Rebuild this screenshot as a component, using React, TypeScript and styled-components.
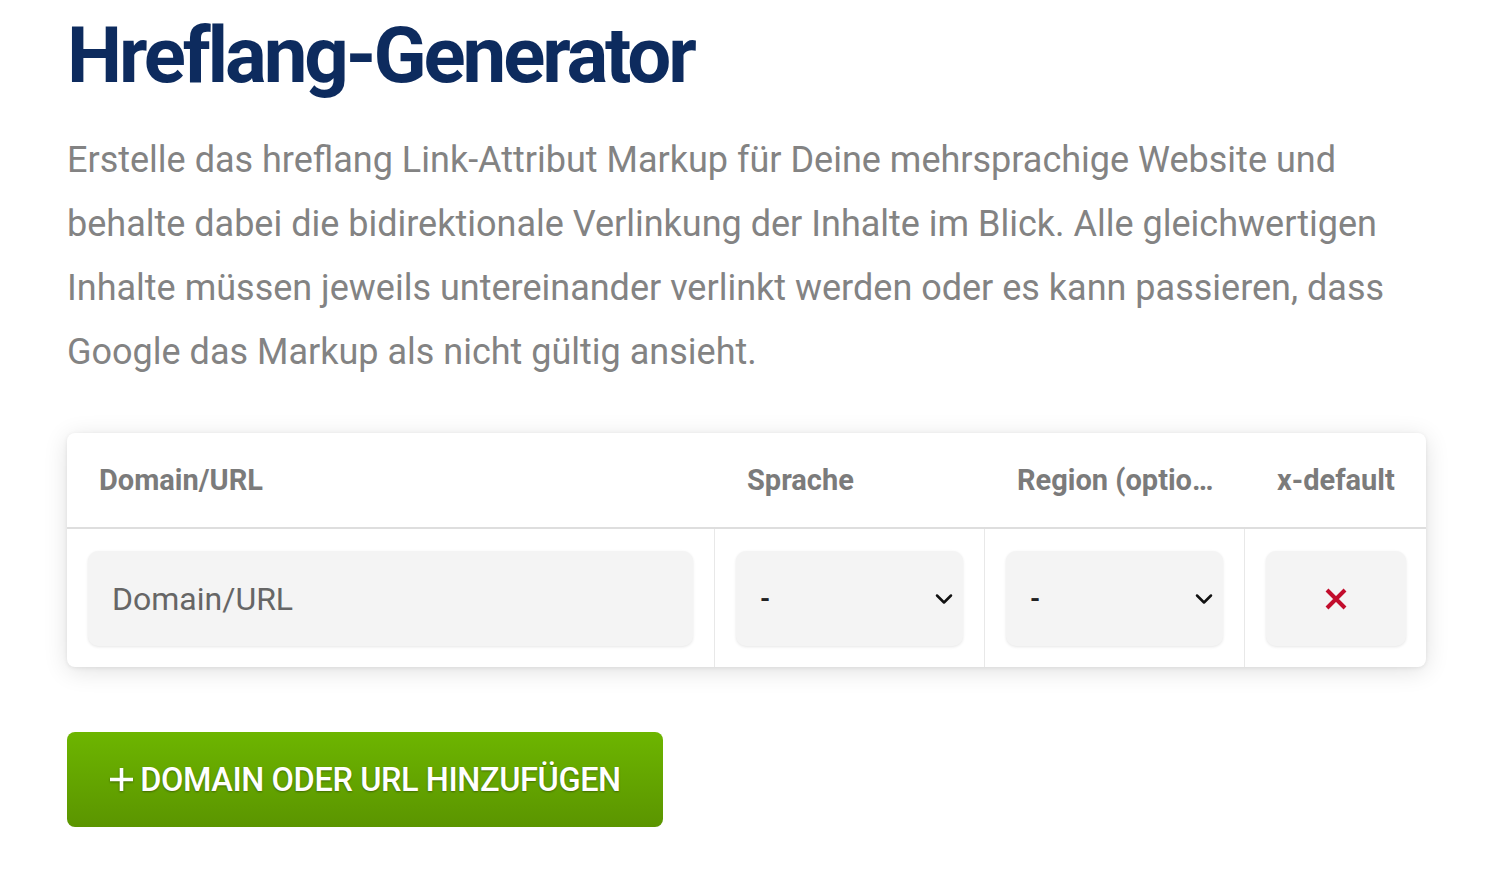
import React, { useState } from 'react'
import styled, { createGlobalStyle } from 'styled-components'

const GlobalStyle = createGlobalStyle`
  body {
    margin: 0;
    background: #fff;
    font-family: Roboto, "Liberation Sans", sans-serif;
  }
`

const Page = styled.main`
  padding: 8px 65px 40px 67px;
`

const Title = styled.h1`
  margin: 0;
  font-size: 78px;
  line-height: 96px;
  font-weight: 700;
  letter-spacing: -3.1px;
  color: #0d2b5e;
`

const Intro = styled.p`
  margin: 24px 0 0;
  font-size: 36px;
  line-height: 64px;
  color: #838383;
  max-width: 1322px;
`

const Card = styled.section`
  margin-top: 49px;
  background: #fff;
  border-radius: 8px;
  box-shadow: 0 4px 24px rgba(0, 0, 0, 0.12), 0 1px 4px rgba(0, 0, 0, 0.08);
  overflow: hidden;
`

const Grid = styled.div`
  display: grid;
  grid-template-columns: 648px 270px 260px 1fr;
`

const HeadCell = styled.div<{ $align?: string }>`
  height: 94px;
  display: flex;
  align-items: center;
  justify-content: ${p => p.$align || 'flex-start'};
  padding: 0 32px;
  font-size: 29px;
  font-weight: 700;
  color: #7b7b7b;
  border-bottom: 2px solid #dedede;
  white-space: nowrap;
`

const Cell = styled.div<{ $last?: boolean }>`
  padding: 22px 21px 21px;
  border-right: ${p => (p.$last ? 'none' : '1px solid #e8e8e8')};
`

const fieldBase = `
  width: 100%;
  height: 95px;
  box-sizing: border-box;
  border: none;
  border-radius: 10px;
  background: #f4f4f4;
  box-shadow: 0 1px 3px rgba(0, 0, 0, 0.1);
  outline: none;
`

const UrlInput = styled.input`
  ${fieldBase}
  padding: 0 24px;
  font-family: Roboto, "Liberation Sans", sans-serif;
  font-size: 32px;
  color: #444;

  &::placeholder {
    color: #666;
  }
`

const SelectBox = styled.label`
  ${fieldBase}
  display: flex;
  align-items: center;
  justify-content: space-between;
  padding: 0 8px 0 24px;
  font-size: 26px;
  font-weight: 700;
  color: #222;
  cursor: pointer;
`

const DeleteButton = styled.button`
  ${fieldBase}
  display: flex;
  align-items: center;
  justify-content: center;
  cursor: pointer;
`

const AddButton = styled.button`
  margin-top: 65px;
  width: 596px;
  height: 95px;
  border: none;
  border-radius: 8px;
  background: linear-gradient(#6db500, #5b9500);
  color: #fff;
  font-family: Roboto, "Liberation Sans", sans-serif;
  font-size: 32.5px;
  font-weight: 500;
  letter-spacing: -0.4px;
  text-shadow: 0 1px 2px rgba(0, 0, 0, 0.35);
  display: flex;
  align-items: center;
  justify-content: center;
  gap: 6px;
  cursor: pointer;
`

const Chevron = () => (
  <svg width="22" height="14" viewBox="0 0 22 14" fill="none">
    <path d="M4 3.5l7 7 7-7" stroke="#111" strokeWidth="2.5" strokeLinecap="round" strokeLinejoin="round" />
  </svg>
)

const Cross = () => (
  <svg width="22" height="22" viewBox="0 0 22 22">
    <path d="M2 2l18 18M20 2L2 20" stroke="#c20d2c" strokeWidth="4" />
  </svg>
)

const Plus = () => (
  <svg width="25" height="25" viewBox="0 0 25 25" style={{ filter: 'drop-shadow(0 1px 1px rgba(0,0,0,.35))' }}>
    <path d="M12.5 1v23M1 12.5h23" stroke="#fff" strokeWidth="3.6" />
  </svg>
)

type Row = { url: string, lang: string, region: string }

export default function App() {
  const [rows, setRows] = useState<Row[]>([{ url: '', lang: '-', region: '-' }])

  return (
    <Page>
      <GlobalStyle />
      <Title>Hreflang-Generator</Title>
      <Intro>
        Erstelle das hreflang Link-Attribut Markup für Deine mehrsprachige Website und behalte dabei die
        bidirektionale Verlinkung der Inhalte im Blick. Alle gleichwertigen Inhalte müssen jeweils
        untereinander verlinkt werden oder es kann passieren, dass Google das Markup als nicht gültig ansieht.
      </Intro>
      <Card>
        <Grid>
          <HeadCell>Domain/URL</HeadCell>
          <HeadCell>Sprache</HeadCell>
          <HeadCell>Region (optio…</HeadCell>
          <HeadCell $align="center">x-default</HeadCell>
          {rows.map((row, i) => (
            <React.Fragment key={i}>
              <Cell>
                <UrlInput
                  placeholder="Domain/URL"
                  value={row.url}
                  onChange={e => setRows(rows.map((r, j) => (j === i ? { ...r, url: e.target.value } : r)))}
                />
              </Cell>
              <Cell>
                <SelectBox>{row.lang}<Chevron /></SelectBox>
              </Cell>
              <Cell>
                <SelectBox>{row.region}<Chevron /></SelectBox>
              </Cell>
              <Cell $last>
                <DeleteButton onClick={() => setRows(rows.filter((_, j) => j !== i))}>
                  <Cross />
                </DeleteButton>
              </Cell>
            </React.Fragment>
          ))}
        </Grid>
      </Card>
      <AddButton onClick={() => setRows([...rows, { url: '', lang: '-', region: '-' }])}>
        <Plus />DOMAIN ODER URL HINZUFÜGEN
      </AddButton>
    </Page>
  )
}
